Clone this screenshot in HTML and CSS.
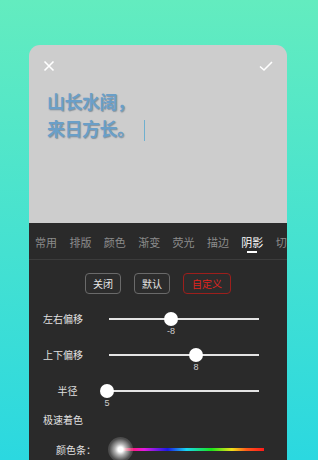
FILE: index.html
```html
<!DOCTYPE html>
<html>
<head>
    <meta charset="utf-8">
    <link rel="stylesheet" href="styles.css">
</head>
<body>
<div class="card">
    <div class="preview">
        <div class="top-bar">
            <svg class="icon" width="12" height="12" viewBox="0 0 12 12">
                <path d="M1.5 1.5 L10.5 10.5 M10.5 1.5 L1.5 10.5" stroke="#fff" stroke-width="1.6" fill="none"/>
            </svg>
            <svg class="icon" width="14" height="12" viewBox="0 0 14 12">
                <path d="M1 6.5 L5 10 L13 2" stroke="#fff" stroke-width="1.6" fill="none"/>
            </svg>
        </div>
        <div class="poem">
            山长水阔，<br>来日方长。<span class="cursor"></span>
        </div>
    </div>

    <div class="panel">
        <div class="tabs">
            <span>常用</span>
            <span>排版</span>
            <span>颜色</span>
            <span>渐变</span>
            <span>荧光</span>
            <span>描边</span>
            <span class="active">阴影</span>
            <span>切换</span>
        </div>

        <div class="buttons">
            <button>关闭</button>
            <button>默认</button>
            <button class="custom">自定义</button>
        </div>

        <div class="row">
            <label>左右偏移</label>
            <div class="slider">
                <div class="track"></div>
                <div class="thumb" style="left: 62px"><span>-8</span></div>
            </div>
        </div>
        <div class="row">
            <label>上下偏移</label>
            <div class="slider">
                <div class="track"></div>
                <div class="thumb" style="left: 87px"><span>8</span></div>
            </div>
        </div>
        <div class="row">
            <label class="short">半径</label>
            <div class="slider">
                <div class="track"></div>
                <div class="thumb" style="left: -2px"><span>5</span></div>
            </div>
        </div>

        <div class="fast">极速着色</div>

        <div class="color-row">
            <label>颜色条：</label>
            <div class="rainbow">
                <div class="glow"></div>
            </div>
        </div>
    </div>
</div>
</body>
</html>
```

FILE: styles.css
```css
html, body {
    margin: 0;
    height: 100%;
}

body {
    background: linear-gradient(#63ecbf, #2bd8e0);
    font-family: "Noto Sans CJK SC", "Noto Sans", sans-serif;
    overflow: hidden;
}

.card {
    margin: 45px 31px 0 29px;
    border-radius: 11px 11px 0 0;
    overflow: hidden;
}

/* grey text preview */
.preview {
    background: #cdcdcd;
    height: 178px;
}

.top-bar {
    display: flex;
    justify-content: space-between;
    align-items: center;
    padding: 15px 14px 0 14px;
    height: 12px;
}

.poem {
    margin: 16px 0 0 18px;
    font-size: 18px;
    font-weight: bold;
    line-height: 27px;
    color: #6a9fc8;
    text-shadow: 1px 1px 1px rgba(70, 90, 110, 0.5);
    letter-spacing: -0.5px;
}

.cursor {
    display: inline-block;
    width: 1px;
    height: 21px;
    margin-left: 9px;
    vertical-align: -5px;
    background: #6fb0cf;
}

/* dark settings panel */
.panel {
    background: #2a2a2a;
    height: 260px;
    color: #d6d6d6;
}

.tabs {
    display: flex;
    gap: 12.4px;
    height: 36px;
    padding-left: 6px;
    white-space: nowrap;
    overflow: hidden;
    border-bottom: 1px solid #3c3c3c;
    font-size: 11px;
    color: #8c8c8c;
}

.tabs span {
    flex: none;
    line-height: 38px;
    position: relative;
}

.tabs .active {
    color: #fff;
}

.tabs .active::after {
    content: "";
    position: absolute;
    left: 6px;
    right: 6px;
    bottom: 6px;
    height: 2px;
    background: #fff;
}

.buttons {
    display: flex;
    justify-content: center;
    gap: 13px;
    padding-top: 13px;
}

button {
    font: 10px "Noto Sans CJK SC", sans-serif;
    height: 21px;
    padding: 0 7px;
    background: #2c2c2c;
    color: #e6e6e6;
    border: 1px solid #6a6a6a;
    border-radius: 4px;
}

button.custom {
    color: #e0241f;
    border-color: #9c1f1c;
    padding: 0 8px;
}

.row {
    display: flex;
    align-items: center;
    height: 36px;
    margin-top: 11px;
}

.row + .row {
    margin-top: 0;
}

.row label {
    width: 40px;
    margin-left: 14px;
    text-align: center;
    font-size: 10px;
    color: #e0e0e0;
    margin-top: -9px;
}

.row label.short {
    margin-left: 17px;
    width: 43px;
}

.slider {
    position: relative;
    width: 150px;
    height: 14px;
    margin-left: 26px;
    margin-top: -8px;
}

.row label.short + .slider {
    margin-left: 20px;
}

.track {
    margin-top: 6px;
    height: 2px;
    background: #e4e4e4;
}

.thumb {
    position: absolute;
    top: 0;
    width: 14px;
    height: 14px;
    margin-left: -7px;
    border-radius: 50%;
    background: #fff;
}

.thumb span {
    position: absolute;
    top: 14px;
    left: -10px;
    width: 34px;
    text-align: center;
    font: 9px "Liberation Sans", sans-serif;
    color: #cfcfcf;
}

.fast {
    font-size: 10px;
    line-height: 14px;
    margin: 0 0 0 14px;
    color: #e0e0e0;
}

.color-row {
    display: flex;
    align-items: center;
    margin-top: 12px;
    height: 20px;
}

.color-row label {
    font-size: 10px;
    color: #e0e0e0;
    margin-left: 27px;
}

.rainbow {
    position: relative;
    width: 146px;
    height: 3px;
    margin-left: 22px;
    background: linear-gradient(to right, #ff1a1a 0%, #ff1a80 10%, #e01ae0 18%, #1a1ae6 34%,
        #18d8f0 47%, #1ae61a 64%, #f0e01a 78%, #ff5a1a 88%, #ff1a1a 100%);
}

.glow {
    position: absolute;
    left: -10px;
    top: -11px;
    width: 25px;
    height: 25px;
    border-radius: 50%;
    background: radial-gradient(circle, #fff 0, #fff 14%, rgba(225, 225, 225, 0.75) 32%, rgba(170, 170, 170, 0.3) 62%, rgba(120, 120, 120, 0) 100%);
}
```
